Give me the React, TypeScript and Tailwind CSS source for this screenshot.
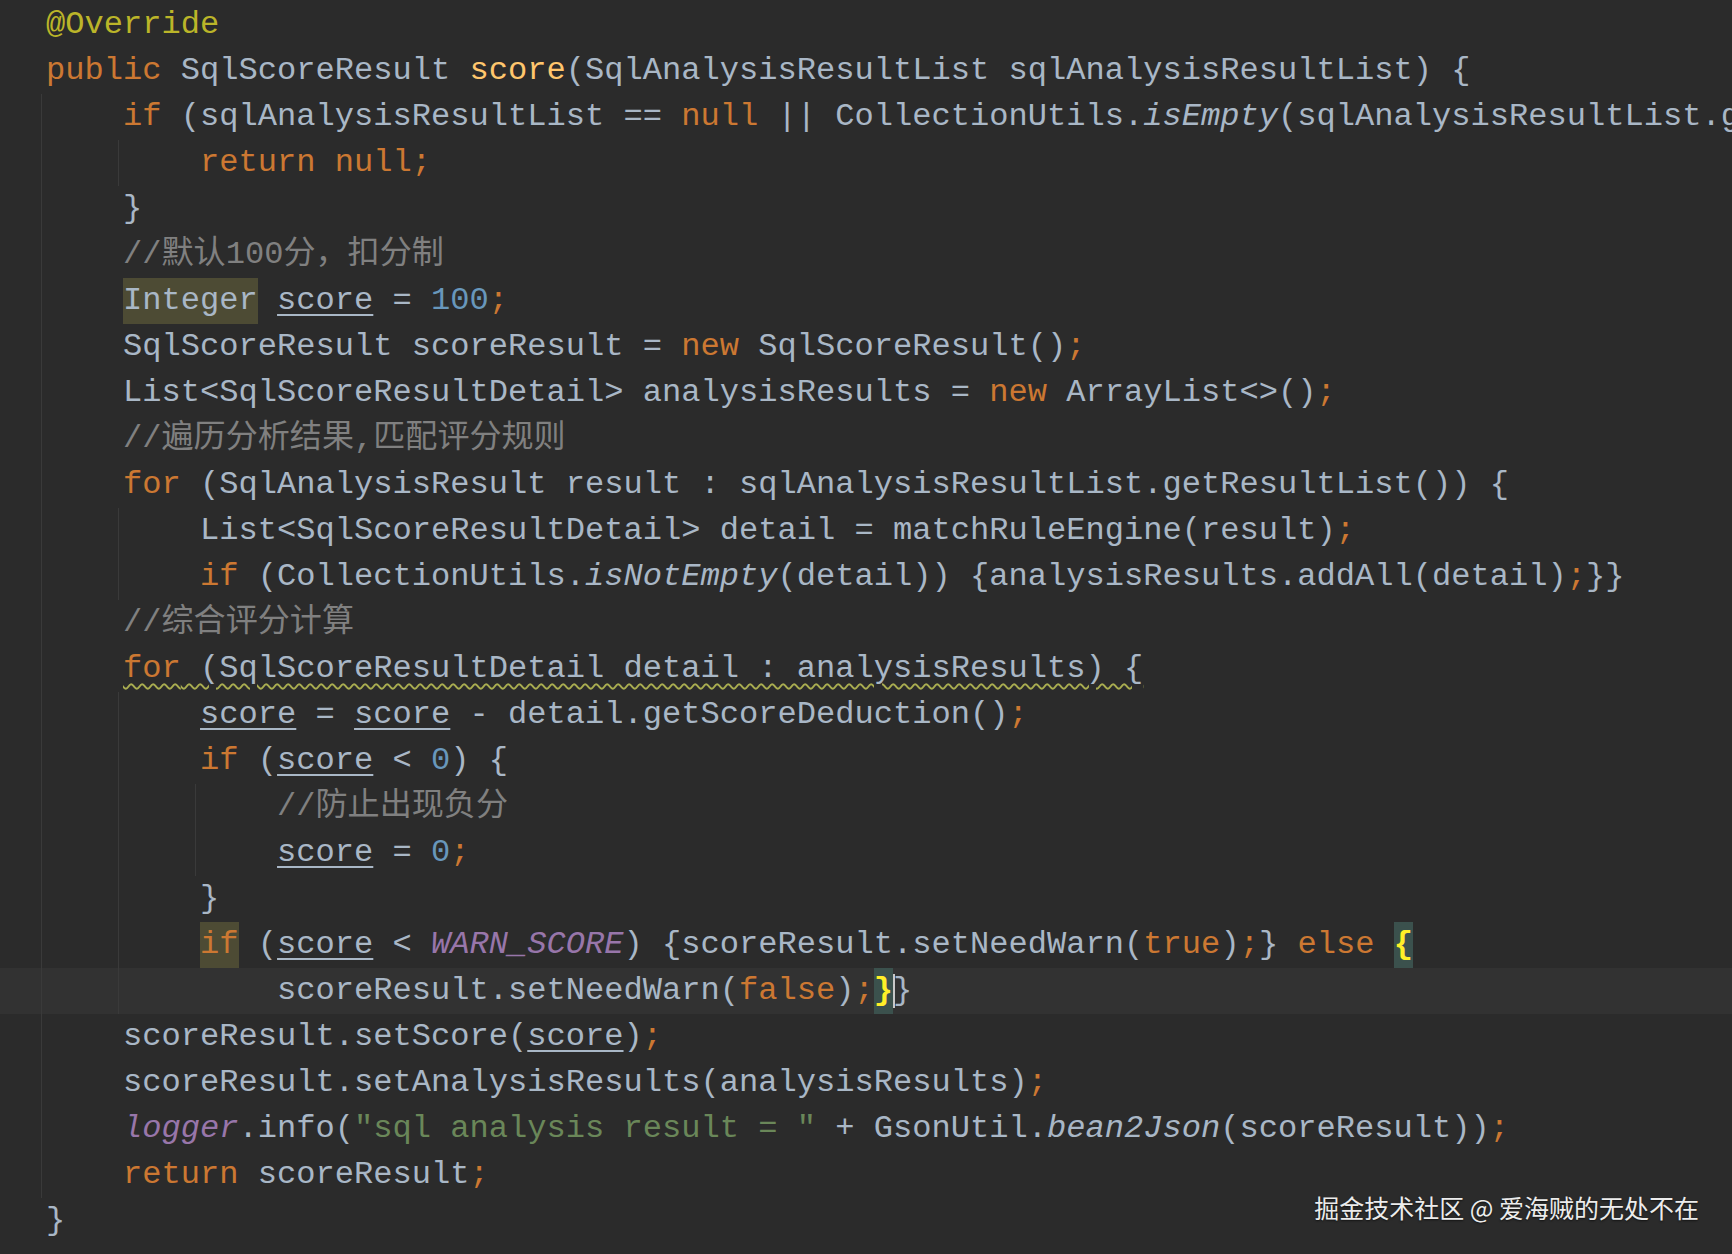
import React from "react";

type Tok = [string, string?];

const K = "text-[#cc7832]";
const A = "text-[#bbb529]";
const M = "text-[#ffc66d]";
const N = "text-[#6897bb]";
const C = "text-[#808080]";
const S = "text-[#6a8759]";
const F = "text-[#9876aa] italic";
const I = "italic";
const U = "underline decoration-[#a9b7c6] decoration-[1.5px] underline-offset-[5px]";

const guideLeft: Record<number, string> = {
  0: "left-[41px]",
  4: "left-[118px]",
  8: "left-[195px]",
};

const Hl = ({ children, className }: { children: React.ReactNode; className: string }) => (
  <span className={`inline-block h-[46px] align-top ${className}`}>{children}</span>
);

const Toks = ({ toks }: { toks: Tok[] }) => (
  <>
    {toks.map(([t, c], i) => (
      <span key={i} className={c}>
        {t}
      </span>
    ))}
  </>
);

const lines: { content: React.ReactNode; guides: number[]; current?: boolean }[] = [
  { content: <Toks toks={[["@Override", A]]} />, guides: [] },
  {
    content: (
      <Toks
        toks={[
          ["public", K],
          [" SqlScoreResult "],
          ["score", M],
          ["(SqlAnalysisResultList sqlAnalysisResultList) {"],
        ]}
      />
    ),
    guides: [],
  },
  {
    content: (
      <Toks
        toks={[
          ["    "],
          ["if", K],
          [" (sqlAnalysisResultList == "],
          ["null", K],
          [" || CollectionUtils."],
          ["isEmpty", I],
          ["(sqlAnalysisResultList.getResultList())) {"],
        ]}
      />
    ),
    guides: [0],
  },
  { content: <Toks toks={[["        "], ["return null;", K]]} />, guides: [0, 4] },
  { content: <Toks toks={[["    }"]]} />, guides: [0] },
  { content: <Toks toks={[["    "], ["//默认100分，扣分制", C]]} />, guides: [0] },
  {
    content: (
      <>
        {"    "}
        <Hl className="bg-[#4d4b34]">Integer</Hl>
        <Toks toks={[[" "], ["score", U], [" = "], ["100", N], [";", K]]} />
      </>
    ),
    guides: [0],
  },
  {
    content: (
      <Toks
        toks={[["    SqlScoreResult scoreResult = "], ["new", K], [" SqlScoreResult()"], [";", K]]}
      />
    ),
    guides: [0],
  },
  {
    content: (
      <Toks
        toks={[
          ["    List<SqlScoreResultDetail> analysisResults = "],
          ["new", K],
          [" ArrayList<>()"],
          [";", K],
        ]}
      />
    ),
    guides: [0],
  },
  { content: <Toks toks={[["    "], ["//遍历分析结果,匹配评分规则", C]]} />, guides: [0] },
  {
    content: (
      <Toks
        toks={[
          ["    "],
          ["for", K],
          [" (SqlAnalysisResult result : sqlAnalysisResultList.getResultList()) {"],
        ]}
      />
    ),
    guides: [0],
  },
  {
    content: (
      <Toks toks={[["        List<SqlScoreResultDetail> detail = matchRuleEngine(result)"], [";", K]]} />
    ),
    guides: [0, 4],
  },
  {
    content: (
      <Toks
        toks={[
          ["        "],
          ["if", K],
          [" (CollectionUtils."],
          ["isNotEmpty", I],
          ["(detail)) {analysisResults.addAll(detail)"],
          [";", K],
          ["}}"],
        ]}
      />
    ),
    guides: [0, 4],
  },
  { content: <Toks toks={[["    "], ["//综合评分计算", C]]} />, guides: [0] },
  {
    content: (
      <>
        {"    "}
        <span className="underline decoration-wavy decoration-[#a9ad50] decoration-[2px] underline-offset-[6px]">
          <Toks toks={[["for", K], [" (SqlScoreResultDetail detail : analysisResults) {"]]} />
        </span>
      </>
    ),
    guides: [0],
  },
  {
    content: (
      <Toks
        toks={[
          ["        "],
          ["score", U],
          [" = "],
          ["score", U],
          [" - detail.getScoreDeduction()"],
          [";", K],
        ]}
      />
    ),
    guides: [0, 4],
  },
  {
    content: (
      <Toks toks={[["        "], ["if", K], [" ("], ["score", U], [" < "], ["0", N], [") {"]]} />
    ),
    guides: [0, 4],
  },
  { content: <Toks toks={[["            "], ["//防止出现负分", C]]} />, guides: [0, 4, 8] },
  {
    content: <Toks toks={[["            "], ["score", U], [" = "], ["0", N], [";", K]]} />,
    guides: [0, 4, 8],
  },
  { content: <Toks toks={[["        }"]]} />, guides: [0, 4] },
  {
    content: (
      <>
        {"        "}
        <Hl className="bg-[#4d4b34] text-[#cc7832]">if</Hl>
        <Toks
          toks={[
            [" ("],
            ["score", U],
            [" < "],
            ["WARN_SCORE", F],
            [") {scoreResult.setNeedWarn("],
            ["true", K],
            [")"],
            [";", K],
            ["} "],
            ["else", K],
            [" "],
          ]}
        />
        <Hl className="bg-[#3b514d] text-[#ffef28] font-bold">{"{"}</Hl>
      </>
    ),
    guides: [0, 4],
  },
  {
    content: (
      <>
        <Toks toks={[["            scoreResult.setNeedWarn("], ["false", K], [")"], [";", K]]} />
        <Hl className="bg-[#3b514d] text-[#ffef28] font-bold">{"}"}</Hl>
        <span className="inline-block w-[2px] h-[34px] -mr-[2px] align-middle bg-[#c8c8c8]" />
        {"}"}
      </>
    ),
    guides: [0, 4],
    current: true,
  },
  {
    content: <Toks toks={[["    scoreResult.setScore("], ["score", U], [")"], [";", K]]} />,
    guides: [0],
  },
  {
    content: <Toks toks={[["    scoreResult.setAnalysisResults(analysisResults)"], [";", K]]} />,
    guides: [0],
  },
  {
    content: (
      <Toks
        toks={[
          ["    "],
          ["logger", F],
          [".info("],
          ['"sql analysis result = "', S],
          [" + GsonUtil."],
          ["bean2Json", I],
          ["(scoreResult))"],
          [";", K],
        ]}
      />
    ),
    guides: [0],
  },
  { content: <Toks toks={[["    "], ["return", K], [" scoreResult"], [";", K]]} />, guides: [0] },
  { content: <Toks toks={[["}"]]} />, guides: [] },
];

export default function App() {
  return (
    <div className="relative w-[1732px] h-[1254px] overflow-hidden bg-[#2b2b2b] text-[#a9b7c6] font-['Liberation_Mono','Noto_Sans_CJK_SC',monospace] text-[32.1px]">
      <div className="flex flex-col pt-[2px]">
        {lines.map((line, i) => (
          <div
            key={i}
            className={`relative h-[46px] leading-[46px] whitespace-pre pl-[46px] ${
              line.current ? "bg-[#323232]" : ""
            }`}
          >
            {line.guides.map((g) => (
              <span key={g} className={`absolute top-0 bottom-0 w-px bg-[#3a3a3a] ${guideLeft[g]}`} />
            ))}
            {line.content}
          </div>
        ))}
      </div>
      <div className="absolute right-[33px] top-[1190px] leading-[34px] text-[25px] text-[#ececec] font-['Noto_Sans_CJK_SC',sans-serif] [text-shadow:0_1px_2px_rgba(0,0,0,0.6)]">
        掘金技术社区 @ 爱海贼的无处不在
      </div>
    </div>
  );
}
